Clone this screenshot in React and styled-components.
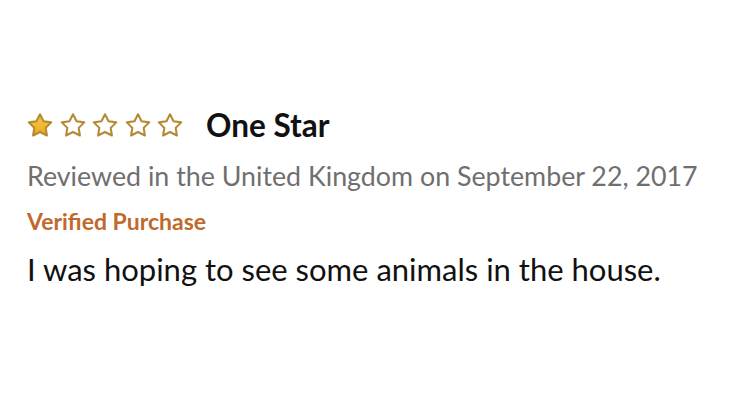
import React from 'react';
import styled, { createGlobalStyle } from 'styled-components';

const GlobalStyle = createGlobalStyle`
  html, body {
    margin: 0;
    padding: 0;
    background: #ffffff;
  }
  body {
    font-family: Lato, "Open Sans", sans-serif;
  }
`;

const Page = styled.div`
  width: 750px;
  height: 419px;
  background: #ffffff;
  padding: 110px 0 0 27px;
  box-sizing: border-box;
`;

const TitleRow = styled.div`
  display: flex;
  align-items: center;
  gap: 23px;
  height: 30px;
`;

const Stars = styled.div`
  display: flex;
  gap: 6.5px;
`;

const Title = styled.h2`
  margin: 0;
  font-family: Lato, sans-serif;
  font-weight: 700;
  font-size: 31.5px;
  color: #111111;
  line-height: 30px;
`;

const Meta = styled.div`
  margin-top: 20px;
  font-size: 26.8px;
  line-height: 32px;
  color: #6f6f6f;
`;

const Verified = styled.div`
  margin-top: 15px;
  font-size: 23px;
  font-weight: 700;
  line-height: 28px;
  color: #c0692c;
`;

const Body = styled.p`
  margin: 16px 0 0;
  font-size: 31px;
  line-height: 36px;
  color: #111111;
`;

const Star = ({ filled }) => (
  <svg width="26" height="25" viewBox="0 0 25 24">
    <defs>
      <linearGradient id="gold" x1="0" y1="0" x2="0" y2="1">
        <stop offset="0" stopColor="#fbcd4a" />
        <stop offset="1" stopColor="#eba51c" />
      </linearGradient>
    </defs>
    <path
      d="M12.5 1.2 L15.88 7.85 L23.25 9 L17.97 14.28 L19.14 21.64 L12.5 18.25 L5.86 21.64 L7.03 14.28 L1.75 9 L9.12 7.85 Z"
      fill={filled ? 'url(#gold)' : '#ffffff'}
      stroke="#b38a35"
      strokeWidth="2"
      strokeLinejoin="round"
    />
  </svg>
);

export default function App() {
  return (
    <>
      <GlobalStyle />
      <Page>
        <TitleRow>
          <Stars>
            {[0, 1, 2, 3, 4].map((i) => (
              <Star key={i} filled={i === 0} />
            ))}
          </Stars>
          <Title>One Star</Title>
        </TitleRow>
        <Meta>Reviewed in the United Kingdom on September 22, 2017</Meta>
        <Verified>Verified Purchase</Verified>
        <Body>I was hoping to see some animals in the house.</Body>
      </Page>
    </>
  );
}
